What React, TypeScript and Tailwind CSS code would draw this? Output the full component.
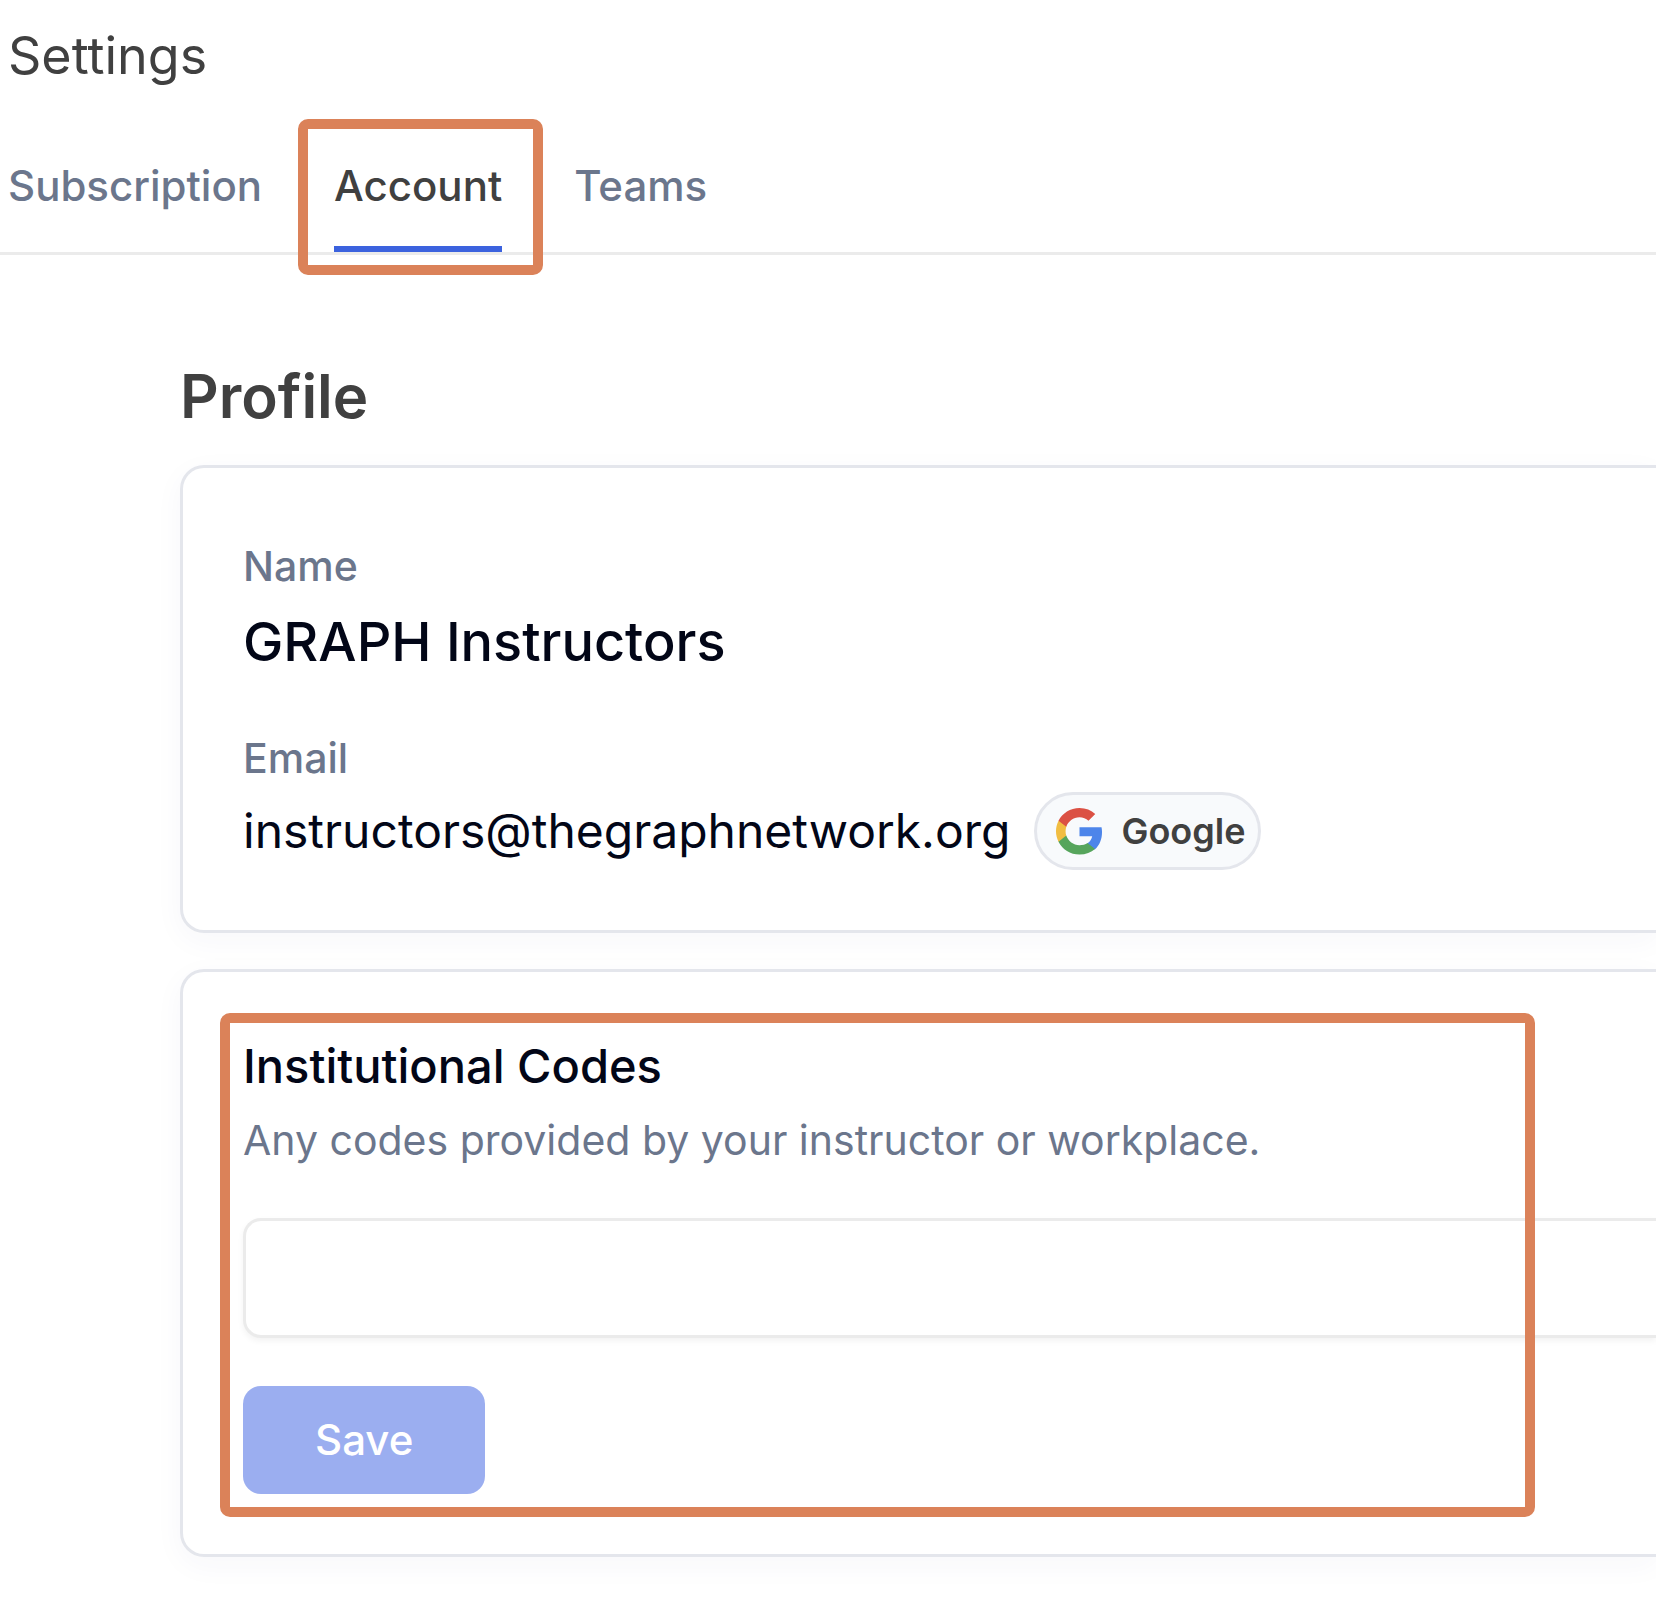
import React, { useState } from 'react';

const tabs = ['Subscription', 'Account', 'Teams'];

function GoogleLogo() {
  return (
    <svg viewBox="-1 -1 49 49" className="size-12 shrink-0" aria-hidden="true">
      <path fill="#4d85ea" d="M47 24.500c0-1.700-.2-3.300-.5-4.900H24v9.300h13c-.6 3-2.300 5.500-4.800 7.200v6h7.700C44.500 38 47 31.800 47 24.500z" />
      <path fill="#56a55c" d="M24 47.500c6.500 0 11.900-2.100 15.900-5.700l-7.700-6c-2.200 1.400-4.900 2.300-8.200 2.300-6.300 0-11.600-4.200-13.500-9.900H2.600v6.200C6.500 42.200 14.600 47.500 24 47.500z" />
      <path fill="#f1bd42" d="M10.500 28.200c-.5-1.400-.7-2.900-.7-4.500s.3-3.100.7-4.500V13H2.600C1 16.200 0 19.900 0 23.700s1 7.500 2.600 10.700l7.900-6.200z" />
      <path fill="#db5144" d="M24 9.400c3.500 0 6.700 1.200 9.200 3.600l6.900-6.900C35.900 2.300 30.500 0 24 0 14.600 0 6.500 5.300 2.600 13l7.900 6.200C12.400 13.600 17.700 9.400 24 9.400z" />
    </svg>
  );
}

function Highlight({ className }: { className: string }) {
  return (
    <span
      aria-hidden="true"
      className={`pointer-events-none absolute rounded-[10px] border-[10px] border-[#db8259] ${className}`}
    />
  );
}

function Card({ children, className }: { children: React.ReactNode; className: string }) {
  return (
    <section
      className={`rounded-l-3xl border-[3px] border-r-0 border-[#e4e6ec] bg-white pb-[60px] pl-[60px] shadow-[0_8px_30px_rgba(60,60,130,0.04)] ${className}`}
    >
      {children}
    </section>
  );
}

export default function App() {
  const [active, setActive] = useState('Account');
  const [code, setCode] = useState('');

  return (
    <div className="min-h-screen overflow-x-hidden bg-white pt-[26px] pb-[60px] font-['Inter',sans-serif] text-[#020617]">
      <h1 className="pl-2 text-[52px] leading-[60px] text-[#404040]">Settings</h1>

      <nav className="mt-[70px] flex gap-[72px] border-b-[3px] border-[#ebebeb] pl-2">
        {tabs.map((tab) => (
          <button
            key={tab}
            type="button"
            aria-current={tab === active ? 'page' : undefined}
            onClick={() => setActive(tab)}
            className={`relative border-b-[6px] pb-[30px] text-[42px] leading-[60px] font-medium ${
              tab === active ? 'border-[#3b62de] text-[#404040]' : 'border-transparent text-[#6b768c]'
            }`}
          >
            {tab}
            {tab === 'Account' && <Highlight className="-top-[37px] -right-[41px] -bottom-[29px] -left-9" />}
          </button>
        ))}
      </nav>

      <main className="pt-[105px] pl-[180px]">
        <h2 className="text-[60px] leading-[72px] font-semibold text-[#404040]">Profile</h2>

        <Card className="mt-[33px] pt-[68px]">
          <dl>
            <dt className="text-[41px] leading-[60px] font-medium text-[#6b768c]">Name</dt>
            <dd className="mt-[10px] text-[54px] leading-[72px] font-medium">GRAPH Instructors</dd>
            <dt className="mt-[50px] text-[41px] leading-[60px] font-medium text-[#6b768c]">Email</dt>
            <dd className="mt-1 flex items-center gap-6 text-[48px] leading-[78px]">
              instructors@thegraphnetwork.org
              <span className="flex items-center gap-[18px] rounded-full border-[3px] border-[#e4e6ec] bg-[#f8fafc] pr-[13px] pl-[18px] text-[36px] leading-[72px] font-semibold text-[#404040]">
                <GoogleLogo />
                Google
              </span>
            </dd>
          </dl>
        </Card>

        <Card className="mt-9 pt-16">
          <form className="relative" onSubmit={(e) => e.preventDefault()}>
            <label htmlFor="codes" className="block text-[47px] leading-[60px] font-medium">
              Institutional Codes
            </label>
            <p id="codes-help" className="mt-[14px] text-[41px] leading-[60px] text-[#6b768c]">
              Any codes provided by your instructor or workplace.
            </p>
            <input
              id="codes"
              type="text"
              aria-describedby="codes-help"
              value={code}
              onChange={(e) => setCode(e.target.value)}
              className="mt-12 block h-[120px] w-full rounded-l-[18px] border-[3px] border-r-0 border-[#ebebeb] bg-white px-9 text-[42px] shadow-[0_3px_6px_rgba(0,0,0,0.05)] outline-none"
            />
            <button
              type="submit"
              disabled={code === ''}
              className="mt-12 block h-[108px] rounded-[18px] bg-[#375de1] px-[72px] text-[42px] leading-[60px] font-medium text-white disabled:bg-[#9baef0]"
            >
              Save
            </button>
            <Highlight className="-top-[23px] right-[121px] -bottom-[23px] -left-[23px]" />
          </form>
        </Card>
      </main>
    </div>
  );
}
